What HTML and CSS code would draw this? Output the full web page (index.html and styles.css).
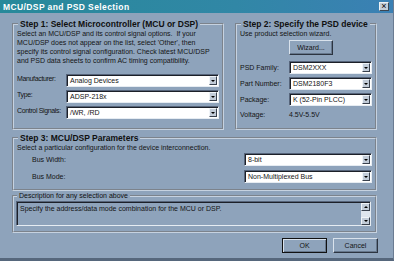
FILE: index.html
```html
<!DOCTYPE html>
<html lang="en">
<head>
  <meta charset="UTF-8" />
  <title>MCU/DSP and PSD Selection</title>
  <link rel="stylesheet" href="styles.css">
</head>
<body>
  <div class="window">
    <div class="titlebar">
      <span class="title">MCU/DSP and PSD Selection</span>
      <span class="close">&times;</span>
    </div>

    <div class="content">
      <div class="top-row">
        <fieldset class="group step1">
          <legend>Step 1: Select Microcontroller (MCU or DSP)</legend>
          <p class="hint">Select an MCU/DSP and its control signal options.&nbsp; If your<br>
            MCU/DSP does not appear on the list, select 'Other', then<br>
            specify its control signal configuration. Check latest MCU/DSP<br>
            and PSD data sheets to confirm AC timing compatibility.</p>
          <div class="fields">
            <div class="field">
              <span class="label">Manufacturer:</span>
              <div class="combo"><span class="combo-value">Analog Devices</span><span class="combo-btn"></span></div>
            </div>
            <div class="field">
              <span class="label">Type:</span>
              <div class="combo"><span class="combo-value">ADSP-218x</span><span class="combo-btn"></span></div>
            </div>
            <div class="field">
              <span class="label">Control Signals:</span>
              <div class="combo"><span class="combo-value">/WR, /RD</span><span class="combo-btn"></span></div>
            </div>
          </div>
        </fieldset>

        <fieldset class="group step2">
          <legend>Step 2: Specify the PSD device</legend>
          <p class="hint">Use product selection wizard.</p>
          <div class="wizard-row"><button class="btn wizard">Wizard...</button></div>
          <div class="fields">
            <div class="field">
              <span class="label">PSD Family:</span>
              <div class="combo"><span class="combo-value">DSM2XXX</span><span class="combo-btn"></span></div>
            </div>
            <div class="field">
              <span class="label">Part Number:</span>
              <div class="combo"><span class="combo-value">DSM2180F3</span><span class="combo-btn"></span></div>
            </div>
            <div class="field">
              <span class="label">Package:</span>
              <div class="combo"><span class="combo-value">K (52-Pin PLCC)</span><span class="combo-btn"></span></div>
            </div>
            <div class="field voltage">
              <span class="label">Voltage:</span>
              <span class="value">4.5V-5.5V</span>
            </div>
          </div>
        </fieldset>
      </div>

      <fieldset class="group step3">
        <legend>Step 3: MCU/DSP Parameters</legend>
        <p class="hint">Select a particular configuration for the device interconnection.</p>
        <div class="param">
          <span class="label">Bus Width:</span>
          <div class="combo"><span class="combo-value">8-bit</span><span class="combo-btn"></span></div>
        </div>
        <div class="param">
          <span class="label">Bus Mode:</span>
          <div class="combo"><span class="combo-value">Non-Multiplexed Bus</span><span class="combo-btn"></span></div>
        </div>
      </fieldset>

      <fieldset class="group desc">
        <legend>Description for any selection above</legend>
        <div class="desc-box">
          <span class="desc-text">Specify the address/data mode combination for the MCU or DSP.</span>
          <div class="scrollbar">
            <span class="sb-btn up"></span>
            <span class="sb-thumb"></span>
            <span class="sb-btn down"></span>
          </div>
        </div>
      </fieldset>

      <div class="actions">
        <button class="btn default">OK</button>
        <button class="btn">Cancel</button>
      </div>
    </div>
  </div>
</body>
</html>
```

FILE: styles.css
```css
* {
  box-sizing: border-box;
}

body {
  margin: 0;
  width: 394px;
  height: 261px;
  overflow: hidden;
  font-family: 'Liberation Sans', Arial, sans-serif;
  font-size: 7px;
  color: #141414;
  background: #8ea3bb;
}

.window {
  width: 394px;
  height: 261px;
  background: #8ea3bb;
  border-bottom: 3px solid #56677c;
  border-right: 1px solid #6b7c92;
}

.titlebar {
  height: 13px;
  display: flex;
  align-items: center;
  justify-content: space-between;
  padding: 0 4px 0 3px;
  background: linear-gradient(90deg, #27899a, #3187a6 60%, #3b80b4);
}

.title {
  color: #fff;
  font-weight: bold;
  font-size: 8.5px;
  letter-spacing: 0.4px;
}

.close {
  width: 10px;
  height: 9px;
  display: flex;
  align-items: center;
  justify-content: center;
  background: #c4ced9;
  border: 1px solid;
  border-color: #eef2f6 #3c4652 #3c4652 #eef2f6;
  font-size: 9px;
  line-height: 1;
  color: #000;
}

.content {
  padding: 6px 16px 0 12px;
}

.top-row {
  display: flex;
  gap: 11px;
}

.group {
  margin: 0;
  padding: 0 3px 0 3px;
  border: 2px groove #c6d2e0;
  min-width: 0;
}

.group legend {
  padding: 0 2px;
  margin-left: 1px;
  font-weight: bold;
  font-size: 8.5px;
  line-height: 10px;
  color: #101010;
}

.hint {
  margin: 0;
  line-height: 9px;
  white-space: nowrap;
}

.label {
  white-space: nowrap;
}

.step1 {
  width: 212px;
  height: 111px;
}

.step1 .fields {
  margin-top: 9px;
}

.fields {
  display: flex;
  flex-direction: column;
  gap: 3px;
}

.field {
  display: flex;
  align-items: center;
  height: 13px;
}

.step1 .label {
  width: 49px;
  flex: none;
  align-self: flex-start;
  line-height: 9px;
  letter-spacing: -0.35px;
  overflow: hidden;
}

.step1 .combo {
  width: 153px;
}

.step2 {
  flex: 1;
  height: 111px;
}

.step2 .label {
  width: 49px;
  flex: none;
}

.step2 .combo {
  width: 84px;
}

.step2 .voltage {
  height: 11px;
}

.wizard-row {
  padding: 2px 0 6px 49px;
}

.btn {
  font-family: inherit;
  font-size: 7px;
  color: #141414;
  background: #8ea3bb;
  border: 1px solid;
  border-color: #d9e2ec #2c3440 #2c3440 #d9e2ec;
  box-shadow: inset -1px -1px 0 #66778c;
  padding: 0;
  height: 15px;
  cursor: pointer;
}

.wizard {
  width: 44px;
}

.combo {
  display: flex;
  height: 13px;
  background: #fff;
  border: 1px solid;
  border-color: #56647a #e6ecf2 #e6ecf2 #56647a;
  box-shadow: inset 1px 1px 0 #1c2028;
}

.combo-value {
  flex: 1;
  padding: 1px 0 0 3px;
  line-height: 10px;
  white-space: nowrap;
  overflow: hidden;
}

.combo-btn {
  width: 8px;
  flex: none;
  margin: 1px 1px 1px 0;
  background: #c2ccd8;
  border: 1px solid;
  border-color: #f0f4f8 #38404c #38404c #f0f4f8;
  display: flex;
  align-items: center;
  justify-content: center;
}

.combo-btn::before {
  content: "";
  border-left: 2px solid transparent;
  border-right: 2px solid transparent;
  border-top: 2px solid #000;
}

.step3 {
  margin-top: 3px;
  height: 58px;
}

.param {
  display: flex;
  align-items: center;
  justify-content: space-between;
  padding-left: 15px;
  margin-top: 1px;
  height: 13px;
}

.param + .param {
  margin-top: 4px;
}

.param .combo {
  width: 128px;
}

.desc {
  height: 42px;
  padding: 0 4px 0 2px;
}

.desc legend {
  font-weight: normal;
  font-size: 7px;
  line-height: 9px;
  margin-left: 1px;
}

.desc-box {
  display: flex;
  height: 25px;
  margin-top: 1px;
  border: 1px solid;
  border-color: #56647a #e6ecf2 #e6ecf2 #56647a;
  box-shadow: inset 1px 1px 0 #1c2028;
}

.desc-text {
  flex: 1;
  padding: 2px 0 0 3px;
  line-height: 9px;
}

.scrollbar {
  width: 9px;
  display: flex;
  flex-direction: column;
  margin: 1px 0 0 0;
}

.sb-btn {
  height: 8px;
  background: #c2ccd8;
  border: 1px solid;
  border-color: #f0f4f8 #38404c #38404c #f0f4f8;
  display: flex;
  align-items: center;
  justify-content: center;
}

.sb-btn.up::before {
  content: "";
  border-left: 2px solid transparent;
  border-right: 2px solid transparent;
  border-bottom: 2px solid #000;
}

.sb-btn.down::before {
  content: "";
  border-left: 2px solid transparent;
  border-right: 2px solid transparent;
  border-top: 2px solid #000;
}

.sb-thumb {
  flex: 1;
  background: #dfe6ee;
}

.actions {
  display: flex;
  justify-content: flex-end;
  gap: 6px;
  margin-top: 5px;
  margin-right: -1px;
}

.actions .btn {
  width: 45px;
}

.btn.default {
  border: 1px solid #111;
  box-shadow: inset 1px 1px 0 #d9e2ec, inset -1px -1px 0 #66778c;
}
```
